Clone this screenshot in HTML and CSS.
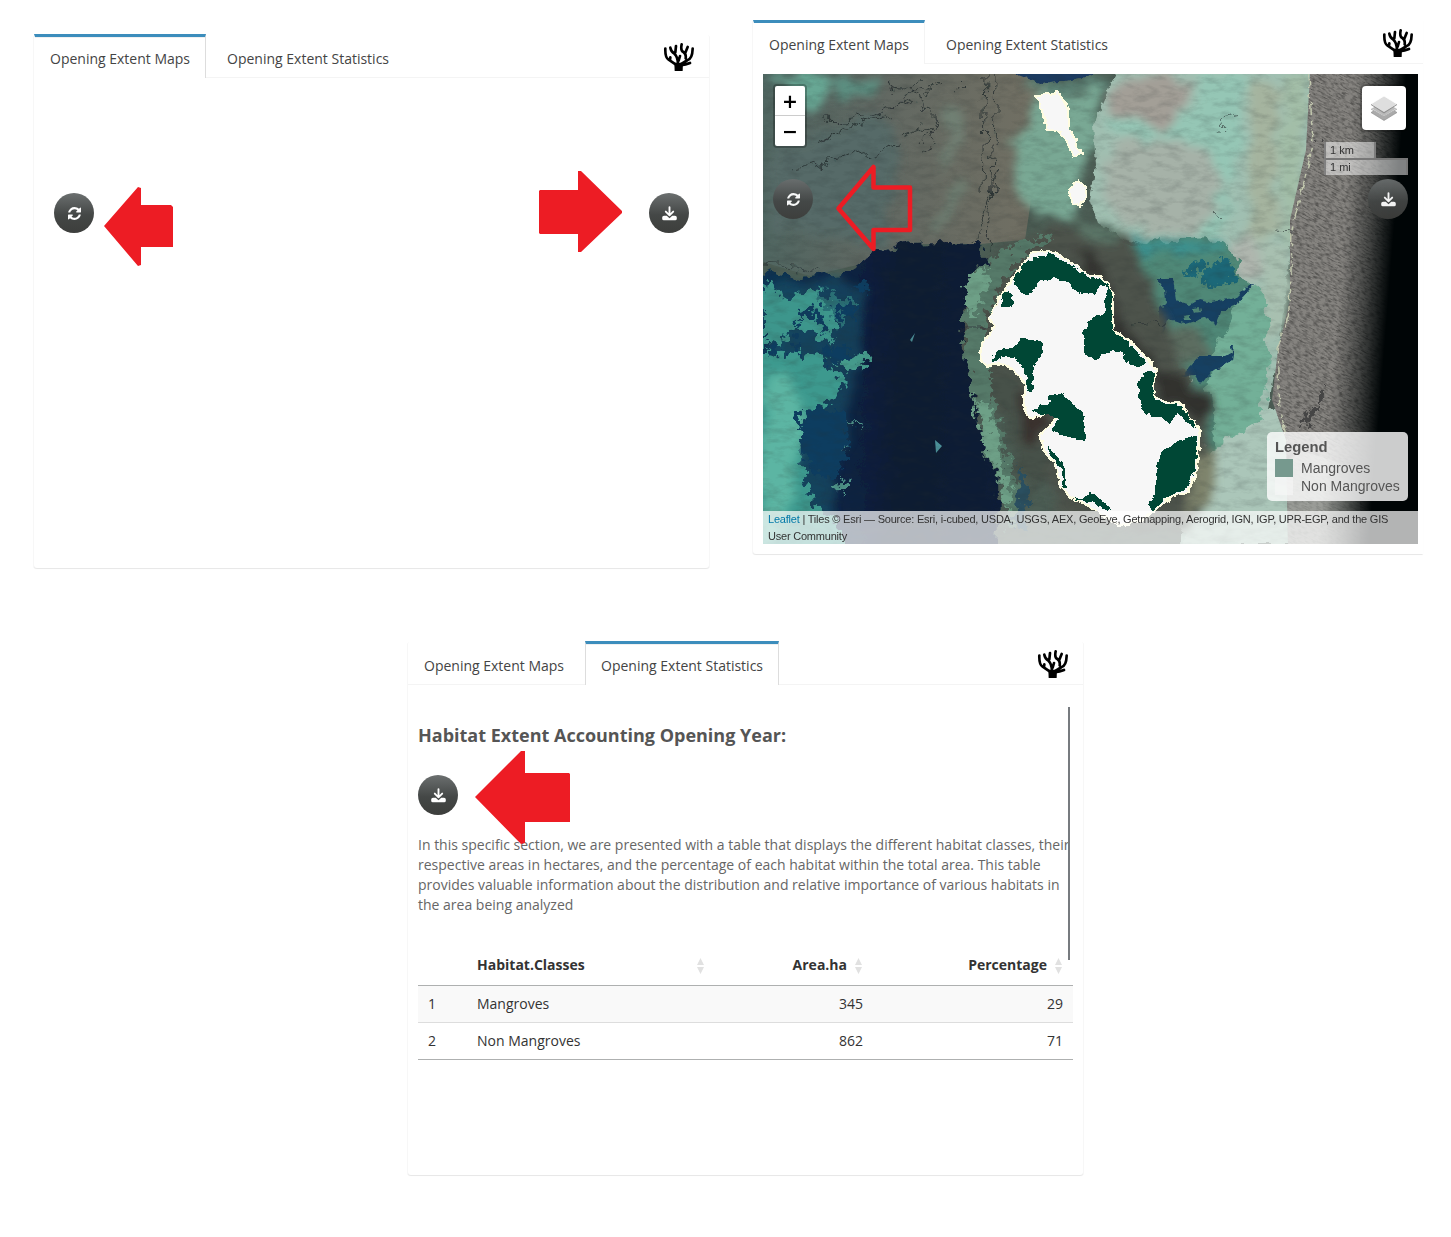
FILE: index.html
```html
<!DOCTYPE html>
<html lang="en">
<head>
<meta charset="utf-8">
<title>Opening Extent</title>
<link rel="stylesheet" href="styles.css">
</head>
<body>
<svg class="defs" width="0" height="0" aria-hidden="true">
  <symbol id="coral" viewBox="0 0 93 90">
    <g fill="none" stroke="#000" stroke-width="8" stroke-linecap="round" stroke-linejoin="round">
      <path d="M7 20Q6 48 17 53L42 70M22 46L21 54M22 17Q24 29 34 35Q44 43 45 66M39 12L37 31M56 7Q52 26 61 30Q70 35 68 49M74 15L67 32M89 20Q88 50 74 54L48 70M51 42L47 56M81 63Q70 68 50 70"/>
    </g>
    <path d="M34 62h26l-1 25H35z"/>
  </symbol>
  <symbol id="refresh" viewBox="0 128 1536 1536"><path fill="#fff" d="M1511 1056q0 5-1 7-64 268-268 434.500t-478 166.500q-146 0-282.500-55t-243.500-157l-129 129q-19 19-45 19t-45-19-19-45v-448q0-26 19-45t45-19h448q26 0 45 19t19 45-19 45l-137 137q71 66 161 102t187 36q134 0 250-65t186-179q11-17 53-117 8-23 30-23h192q13 0 22.500 9.500t9.500 22.500zm25-800v448q0 26-19 45t-45 19h-448q-26 0-45-19t-19-45 19-45l138-138q-148-137-349-137-134 0-250 65t-186 179q-11 17-53 117-8 23-30 23h-199q-13 0-22.500-9.500t-9.500-22.500v-7q65-268 270-434.500t480-166.500q146 0 284 55.500t245 156.500l130-129q19-19 45-19t45 19 19 45z"/></symbol>
  <symbol id="download" viewBox="0 0 15 15"><path d="M7.500 1.200V9M3.800 5.600L7.500 9.300L11.200 5.600" fill="none" stroke="#fff" stroke-width="1.900" stroke-linecap="round" stroke-linejoin="round"/><path fill="#fff" d="M2 9.800H4.800L7.500 12.300L10.200 9.800H13Q14.800 9.800 14.800 11.400V12.800Q14.800 14.300 13.200 14.300H1.800Q.2 14.300 .2 12.800V11.400Q.2 9.800 2 9.800z"/></symbol>
  <symbol id="sort" viewBox="0 0 7 16"><path fill="#e1e1e1" d="M3.500 0L7 7H0zM0 9h7L3.500 16z"/></symbol>
</svg>

<main class="page">
  <div class="row">
    <section class="card">
      <header class="tabs">
        <span class="tab tab-active">Opening Extent Maps</span>
        <span class="tab">Opening Extent Statistics</span>
        <svg class="coral"><use href="#coral"/></svg>
      </header>
      <div class="tools">
        <button class="round"><svg class="ico"><use href="#refresh"/></svg></button>
        <button class="round"><svg class="ico ico-dl"><use href="#download"/></svg></button>
      </div>
      <svg class="marks" viewBox="34 34 675 534"><path d="M104 226L138 187L141 188V205H171L173 207V247H141V265L138 266zM539 191L540 190H578V171H581L622 211V213L581 252H578V234H540L539 233z"/></svg>
    </section>

    <section class="card card-map">
      <header class="tabs tabs-soft">
        <span class="tab tab-active">Opening Extent Maps</span>
        <span class="tab">Opening Extent Statistics</span>
        <svg class="coral"><use href="#coral"/></svg>
      </header>
      <div class="map">
        <svg class="terrain" viewBox="763 74 655 470" preserveAspectRatio="none">
          <defs>
            <linearGradient id="shore" x1="0" x2="1"><stop offset="0" stop-color="#506661"/><stop offset=".4" stop-color="#616862"/><stop offset="1" stop-color="#737063"/></linearGradient>
            <linearGradient id="deep" x1="0" x2="1"><stop offset="0" stop-color="#0d3655"/><stop offset=".4" stop-color="#0a2141"/><stop offset=".6" stop-color="#0a1a31"/><stop offset="1" stop-color="#0a1d37"/></linearGradient>
            <linearGradient id="ocean" gradientUnits="userSpaceOnUse" x1="1338" y1="300" x2="1388" y2="304"><stop offset="0" stop-color="#000506" stop-opacity="0"/><stop offset=".45" stop-color="#000506" stop-opacity=".4"/><stop offset="1" stop-color="#000506"/></linearGradient>
            <filter id="ragged" x="-5%" y="-5%" width="110%" height="110%"><feTurbulence type="fractalNoise" baseFrequency=".06" numOctaves="4" seed="4"/><feDisplacementMap in="SourceGraphic" scale="22" xChannelSelector="R" yChannelSelector="G"/><feGaussianBlur stdDeviation=".7"/></filter>
            <filter id="cloudy" x="-10%" y="-10%" width="120%" height="120%"><feTurbulence type="fractalNoise" baseFrequency=".04" numOctaves="4" seed="9"/><feDisplacementMap in="SourceGraphic" scale="28" xChannelSelector="R" yChannelSelector="G"/><feGaussianBlur stdDeviation="4"/></filter>
            <filter id="steps" x="-5%" y="-5%" width="110%" height="110%"><feTurbulence type="fractalNoise" baseFrequency=".16" numOctaves="2" seed="2"/><feDisplacementMap in="SourceGraphic" scale="6" xChannelSelector="R" yChannelSelector="G"/></filter>
            <filter id="broken" x="-5%" y="-5%" width="110%" height="110%"><feTurbulence type="fractalNoise" baseFrequency=".13" numOctaves="3" seed="12"/><feDisplacementMap in="SourceGraphic" scale="24" xChannelSelector="R" yChannelSelector="G"/><feGaussianBlur stdDeviation=".6"/></filter>
            <filter id="grain" x="0" y="0" width="100%" height="100%" color-interpolation-filters="sRGB"><feTurbulence type="fractalNoise" baseFrequency=".06 .14" numOctaves="5" seed="7"/><feColorMatrix values="0 0 0 0 .15  0 0 0 0 .18  0 0 0 0 .18  2 0 0 0 -.85"/></filter>
            <filter id="waves" x="0" y="0" width="100%" height="100%" color-interpolation-filters="sRGB"><feTurbulence type="fractalNoise" baseFrequency=".18 .7" numOctaves="3" seed="5"/><feColorMatrix values="0 0 0 0 .1  0 0 0 0 .1  0 0 0 0 .1  3 0 0 0 -1.250"/></filter>
            <clipPath id="reefclip"><path d="M1310 74H1418V544H1288L1286 440L1272 400L1278 350L1290 300V220L1306 150z"/></clipPath>
          </defs>
          <rect x="763" y="74" width="655" height="470" fill="#4c5d54"/>
          <path d="M763 74H1050L1025 240L980 244H905L870 262L810 276L763 262z" fill="url(#shore)"/>
          <g filter="url(#cloudy)">
            <path d="M765 74H830L828 95L808 110L780 78z" fill="#67a794"/>
            <path d="M830 80H885L870 95L835 98z" fill="#5c8f81"/>
            <path d="M770 150L870 115L900 130L890 250L770 230z" fill="#566b68"/>
            <path d="M945 110L965 112L955 165L940 170z" fill="#74877b" opacity=".7"/>
            <path d="M930 225L960 180L965 190L935 235z" fill="#6e8578" opacity=".7"/>
            <path d="M1030 85L1080 100L1105 74L1092 170L1070 225L1020 200L1013 150L1035 125z" fill="#79a894"/>
            <path d="M1020 80H1110V90L1060 92z" fill="#5b8276"/>
          </g>
          <path d="M1005 70H1104L1085 77L1065 81L1042 84z" fill="#1b3a60" filter="url(#steps)"/>

          <path d="M1117 70H1325L1300 180L1290 250L1280 340L1262 445L1240 544H1180L1200 430L1170 250L1125 240L1098 223L1090 200L1096 165L1093 125z" fill="#a0bfb1" filter="url(#steps)"/>
          <g filter="url(#cloudy)">
            <path d="M1120 76H1195L1180 110L1170 128L1145 125L1108 110z" fill="#a39f97"/>
            <path d="M1200 74H1250L1240 150L1220 235L1205 240L1190 160L1140 145L1104 125L1109 112L1160 130L1195 110z" fill="#95c6b5"/>
            <path d="M1110 140L1210 145L1225 190L1200 235L1130 230L1098 195z" fill="#a6b2a8"/>
            <path d="M1250 80L1280 90L1275 260L1250 240z" fill="#a5b49f"/>
            <path d="M1282 74H1308L1300 220L1282 250z" fill="#a3bea7"/>
            <path d="M1225 240L1255 235L1260 270L1245 285z" fill="#afb6ae"/>
            <path d="M1255 240L1290 250L1285 330L1265 340z" fill="#a8c0b0"/>
          </g>
          <g filter="url(#ragged)">
            <path d="M1125 242L1222 240L1250 285L1262 350L1262 445L1200 450L1190 380L1140 320z" fill="#508877"/>
            <path d="M1245 290L1262 285L1270 345L1265 410L1250 440L1215 450L1210 390L1215 345z" fill="#73b098"/>
            <path d="M1215 450L1262 415L1285 400L1310 450V544H1180L1205 470z" fill="#abc6b9"/>
          </g>
          <g filter="url(#cloudy)">
            <path d="M1132 240L1222 241L1225 252L1140 256z" fill="#3b9190"/>
            <path d="M1135 330L1200 330L1215 350L1180 365L1200 400L1160 360z" fill="#5b6d61"/>
          </g>
          <g fill="#173f62" filter="url(#steps)">
            <path fill-rule="evenodd" d="M1157 278L1173 278L1176 300L1190 305L1200 299L1212 302L1235 298L1249 284L1254 284L1236 305L1220 312L1215 326L1208 317L1185 324L1168 320L1163 333L1160 325L1160 308L1166 302L1165 290zM1192 308L1200 307L1201 312L1194 313zM1183 316L1190 315V320H1184z"/>
            <path d="M1180 378L1200 356L1225 356L1232 352L1231 347H1234L1232 360L1215 371L1206 377L1200 384L1194 375z"/>
          </g>
          <path d="M1180 276L1196 260L1203 264L1201 272L1193 278zM1204 285L1206 267L1227 258L1238 275L1230 284L1216 287z" fill="#1a6778" filter="url(#broken)"/>
          <g filter="url(#cloudy)">
            <path d="M1050 225L1130 240L1165 320L1180 365L1215 410L1212 435L1204 510L1175 530L1060 520L1020 430L960 390L955 300L1000 250z" fill="#4d534c"/>
            <path d="M1068 245L1100 260L1130 335L1165 365L1210 405L1205 430L1188 410L1160 400L1150 365L1112 340L1110 295z" fill="#30312f"/>
            <path d="M1055 455L1035 430L1010 375L985 370L975 345L985 300L1020 255L1000 250L975 290L965 350L1000 410L1025 500z" fill="#475148"/>
            <path d="M1010 385L1030 400L1040 420L1055 420L1035 450L1020 420z" fill="#3b322e"/>
            <path d="M1065 217L1100 225L1125 237L1090 240z" fill="#5c7668"/>
            <path d="M1200 450L1215 455L1205 500L1180 520z" fill="#7e836c"/>
          </g>

          <path filter="url(#ragged)" d="M755 267L800 278L850 272L880 252L910 244L977 242L990 262L968 290L962 340L975 385L982 430L1000 460L997 555H755z" fill="url(#deep)"/>
          <path filter="url(#cloudy)" d="M765 285L840 280L870 290L862 340L850 410L835 500L825 540H765z" fill="#1d5c71" opacity=".5"/>
          <g filter="url(#broken)">
            <path d="M763 280L790 300L805 288L820 290L838 330L830 345L815 335L795 325L780 345L770 340L763 355z" fill="#3d968c"/>
            <path d="M766 355L800 352L820 356L830 370L848 382L835 395L820 410L812 420L802 430L800 455L806 480L812 500L822 515L838 518L840 550H755V355z" fill="#3c998e"/>
            <path d="M835 360L866 354L868 362L850 373z" fill="#449a8b"/>
            <path d="M815 290L853 300L842 325L830 315z" fill="#2c7177"/>
            <path d="M828 445l8-5 3 6-5 6zM815 460l7 3-2 6-6-2zM838 480l6-2 2 10-7 6zM845 415l20 12-8-1zM843 440l6 12-4-2z" fill="#50958a"/>
          </g>
          <path filter="url(#cloudy)" d="M766 372L790 380L808 415L795 460L795 510L775 545H755z" fill="#5cb5a3"/>
          <g filter="url(#broken)">
            <path d="M975 270L1000 252L1025 240L1055 236L1020 260L1000 290L985 320L990 380L1000 430L1012 470L1025 510L1010 530L997 470L979 452L990 440L980 420L970 385L965 350L962 315L970 300z" fill="#567a69"/>
            <path d="M968 276L990 266L984 290L972 320L964 302zM975 400L990 405L1000 450L1012 490L1006 512L998 470L985 450z" fill="#6ea087"/>
            <path d="M1020 465L1030 490L1025 530L1015 525z" fill="#294f61"/>
          </g>
          <path d="M935 440L942 446L936 453zM910 340L915 333L912 342z" fill="#4b8f98"/>
          <g fill="#0f3c60" filter="url(#broken)"><circle cx="797" cy="346" r="6"/><circle cx="775" cy="349" r="5"/><circle cx="840" cy="309" r="8"/><circle cx="852" cy="310" r="6"/><circle cx="862" cy="287" r="7"/><path d="M792 330L800 310L820 308L828 335L820 328L814 316L803 316zM798 415L815 410L845 410L850 420L842 470L830 478L815 475L803 450zM820 350L850 345L842 362L825 360z"/></g>

          <rect x="763" y="74" width="655" height="470" filter="url(#grain)" opacity=".2"/>

          <g clip-path="url(#reefclip)">
            <rect x="1265" y="74" width="153" height="470" fill="#85837f"/>
            <g transform="rotate(28 1340 300)"><rect x="1060" y="0" width="520" height="620" filter="url(#waves)" opacity=".42"/></g>
            <path d="M1300 420L1320 402L1320 388L1325 394L1315 415L1300 428zM1319 140l6-3 1 7z" fill="#444" filter="url(#broken)"/>
            <path d="M1275 480L1300 450L1360 470V544H1260z" fill="#b0b5af" opacity=".5"/>
          </g>
          <path d="M1309 74L1313 145L1302 190L1292 230L1290 310L1277 350L1280 410L1287 440" fill="none" stroke="#c2c8ae" stroke-width="1.500" stroke-dasharray="14 6 4 3" filter="url(#steps)"/>
          <rect x="1300" y="74" width="118" height="470" fill="url(#ocean)"/>

          <g fill="none" stroke="#272f30" stroke-width="1" filter="url(#ragged)">
            <path d="M818 120Q860 125 905 102T930 85M820 142Q850 125 890 115M795 170Q850 160 900 145M915 85L925 108L938 120L925 140M905 135L930 125L937 145L920 152M985 75L982 190M995 78L990 250M1000 170L980 225L972 240M890 75Q880 90 905 90L925 80M960 80L970 90L955 98" opacity=".85"/>
            <path d="M763 265L795 267L820 272" opacity=".6"/>
            <path d="M1235 112L1225 125L1217 134M1214 211L1222 220M1275 230L1292 231" opacity=".6"/>
            <path d="M958 328H996M1132 329L1150 325L1162 326" opacity=".7"/>
          </g>

          <g fill="#f7f7f7" stroke="#fffde0" stroke-width="2" filter="url(#steps)" shape-rendering="crispEdges">
            <path d="M1036 95L1048 94L1058 92L1068 107L1069 127L1079 148L1081 153L1074 157L1061 132L1047 130L1041 107z"/>
            <path d="M1078 180L1086 187V198L1080 206L1073 203L1069 192L1073 184z"/>
            <path d="M1030 254L1044 251L1058 254L1070 262L1090 275L1101 277L1113 292V330L1130 342L1142 353L1157 370L1152 383L1155 397L1167 403L1180 402L1190 417L1200 430L1197 470L1188 492L1170 498L1155 510L1143 520L1120 526L1107 518L1087 505L1070 497L1060 487L1055 463L1045 453L1040 435L1057 418L1047 413L1032 419L1024 410L1025 383L1010 367L1000 363L987 367L980 360L982 343L995 327L989 317L1002 293L1012 280z"/>
          </g>
          <g fill="#064635" filter="url(#steps)" shape-rendering="crispEdges">
            <path d="M1012 284L1022 265L1033 258L1050 254L1067 263L1090 278L1100 279L1112 290L1112 330L1130 344L1147 363L1140 368L1125 362L1123 353L1112 350L1093 360L1083 352V333L1092 318L1105 313V297L1108 287L1100 285L1095 294L1080 293L1067 283L1055 278L1038 282L1033 293L1022 294z"/>
            <path d="M1002 293L1008 289L1012 296V308H1001z"/>
            <path d="M991 360L998 350L1012 347L1023 339L1043 342L1042 353L1033 367L1034 380L1032 391H1028L1027 378L1023 370L1015 358L1002 357L992 362z"/>
            <path d="M1032 413L1042 405L1048 405L1050 395L1062 393L1070 402L1083 412L1086 440L1067 437L1052 430L1058 419L1043 413z"/>
            <path d="M1046 444L1052 452L1063 463L1067 488H1063L1062 468L1050 455z"/>
            <path d="M1138 382L1145 372L1156 372L1151 385L1155 400L1167 405L1177 403L1186 411L1197 428L1183 420L1176 413L1170 423L1162 417L1152 417L1140 408z"/>
            <path d="M1197 435V455L1195 470L1187 487L1163 500L1153 510L1148 505L1155 493L1157 467L1163 450L1180 440z"/>
            <path d="M1073 498L1082 499L1090 493L1102 500L1112 511L1103 508L1092 502L1080 501z"/>
          </g>
        </svg>
        <div class="zoom"><span>+</span><span>−</span></div>
        <div class="layers">
          <svg viewBox="0 0 26 26"><path fill="#aaa" stroke="#888" stroke-width=".6" d="M0 17.500L13 10L26 17.500L13 25.500z"/><path fill="#bbb" stroke="#fff" stroke-width=".8" d="M0 13.500L13 6L26 13.500L13 21.500z"/><path fill="#aaa" d="M0 13.500L13 21L26 13.500V14.500L13 22.500L0 14.500z"/><path fill="#dedede" stroke="#fff" stroke-width=".8" d="M0 9L13 1L26 9L13 17.500z"/><path fill="#8f8f8f" d="M0 9L13 17L26 9V10L13 18.500L0 10z"/></svg>
        </div>
        <div class="scale"><div class="km">1 km</div><div class="mi">1 mi</div></div>
        <div class="legend">
          <strong>Legend</strong>
          <div class="entry"><i class="sw sw-m"></i>Mangroves</div>
          <div class="entry"><i class="sw sw-n"></i>Non Mangroves</div>
        </div>
        <div class="credit"><a>Leaflet</a> | Tiles © Esri — Source: Esri, i-cubed, USDA, USGS, AEX, GeoEye, Getmapping, Aerogrid, IGN, IGP, UPR-EGP, and the GIS<br>User Community</div>
      </div>
      <div class="tools tools-over">
        <button class="round"><svg class="ico"><use href="#refresh"/></svg></button>
        <button class="round"><svg class="ico ico-dl"><use href="#download"/></svg></button>
      </div>
      <svg class="marks marks-line" viewBox="753 20 670 534"><path d="M838.500 208.500L873.500 167V187.500H910V230H873.500V249z"/></svg>
    </section>
  </div>

  <section class="card card-stats">
    <header class="tabs">
      <span class="tab">Opening Extent Maps</span>
      <span class="tab tab-active tab-mid">Opening Extent Statistics</span>
      <svg class="coral"><use href="#coral"/></svg>
    </header>
    <div class="stats">
      <h2>Habitat Extent Accounting Opening Year:</h2>
      <button class="round"><svg class="ico ico-dl"><use href="#download"/></svg></button>
      <p>In this specific section, we are presented with a table that displays the different habitat classes, their<br>respective areas in hectares, and the percentage of each habitat within the total area. This table<br>provides valuable information about the distribution and relative importance of various habitats in<br>the area being analyzed</p>
      <table>
        <colgroup><col class="c1"><col class="c2"><col class="c3"><col class="c4"></colgroup>
        <thead><tr><th></th><th><div class="head"><span>Habitat.Classes</span><svg class="sort"><use href="#sort"/></svg></div></th><th><div class="head head-num"><span>Area.ha</span><svg class="sort"><use href="#sort"/></svg></div></th><th><div class="head head-num"><span>Percentage</span><svg class="sort"><use href="#sort"/></svg></div></th></tr></thead>
        <tbody>
          <tr><td>1</td><td>Mangroves</td><td class="num">345</td><td class="num">29</td></tr>
          <tr><td>2</td><td>Non Mangroves</td><td class="num">862</td><td class="num">71</td></tr>
        </tbody>
      </table>
    </div>
    <div class="scrollbar"></div>
    <svg class="marks" viewBox="408 641 675 534"><path d="M475 797L521 751H525V773H569L570 774V822H525V843L521 844z"/></svg>
  </section>
</main>
</body>
</html>
```
FILE: styles.css
```css
* { box-sizing: border-box; }
body { margin: 0; background: #fff; font: 14px/20px "Open Sans", "Noto Sans", sans-serif; color: #333; }
.defs { position: absolute; }
.page { width: 1451px; height: 1237px; padding: 20px 0 0 34px; overflow: hidden; }
.row { display: flex; align-items: flex-start; gap: 44px; }
.card { position: relative; width: 675px; height: 534px; flex: none; margin-top: 14px; border-radius: 3px; background: #fff; box-shadow: 0 1px 1px rgba(0,0,0,.07), -1px 1px 0 #f8f8f8, 1px 1px 0 #f8f8f8; }
.card-map { width: 670px; margin-top: 0; border-radius: 0 0 0 3px; box-shadow: 0 1px 1px rgba(0,0,0,.07), -1px 1px 0 #f8f8f8; }
.card-stats { margin: 73px 0 0 374px; }

.tabs { display: flex; height: 44px; border-bottom: 1px solid #f4f4f4; }
.tab { height: 44px; margin-right: 5px; padding: 12px 15px 0; border: solid transparent; border-width: 3px 1px 0; color: #444; white-space: nowrap; }
.tab-active { background: #fff; border-top-color: #3c8dbc; border-right-color: #ddd; box-shadow: inset 0 1px 0 #f0f0f0; }
.tab-mid { border-left-color: #ddd; }
.tabs-soft .tab-active { border-right-color: #f4f4f4; box-shadow: none; }
.coral { width: 31px; height: 30px; margin: 8px 15px 0 auto; }
.card-map .coral { margin-right: 10px; }

.round { display: flex; width: 40px; height: 40px; align-items: center; justify-content: center; padding: 0; border: 0; border-radius: 50%; background: linear-gradient(#6b6f6f, #444746 55%, #3d3e3c); }
.ico { width: 13px; height: 13px; }
.ico-dl { width: 15px; height: 15px; }
.tools { display: flex; justify-content: space-between; margin: 115px 20px 0; }
.tools-over { position: absolute; top: 159px; left: 20px; width: 635px; margin: 0; }
.tools-over .round { opacity: .95; }
.marks { position: absolute; inset: 0; width: 100%; height: 100%; pointer-events: none; fill: #ed1c24; }
.marks-line { fill: none; stroke: #ed1c24; stroke-width: 4.500; stroke-linejoin: round; }

.map { position: relative; width: 655px; height: 470px; margin: 10px 0 0 10px; overflow: hidden; font-family: "Liberation Sans", Arial, sans-serif; }
.terrain { display: block; width: 655px; height: 470px; }
.zoom { position: absolute; left: 12px; top: 12px; width: 30px; height: 60px; border-radius: 2px; background: #fff; box-shadow: 0 0 0 2px rgba(0,0,0,.25); font: bold 19px/30px "DejaVu Sans", sans-serif; color: #000; text-align: center; }
.zoom span { display: block; height: 30px; }
.zoom span:first-child { border-bottom: 1px solid #ccc; }
.layers { position: absolute; left: 599px; top: 12px; display: flex; width: 44px; height: 44px; align-items: center; justify-content: center; border-radius: 4px; background: #fff; box-shadow: 0 0 0 2px rgba(0,0,0,.2); }
.layers svg { width: 26px; height: 26px; }
.scale { position: absolute; left: 561px; top: 68px; font-size: 11px; line-height: 16px; color: #333; }
.scale div { height: 16px; padding-left: 4px; background: rgba(255,255,255,.5); border: 2px solid rgba(119,119,119,.85); border-top: 0; }
.scale .km { width: 52px; border-bottom: 0; }
.scale .mi { width: 84px; border-top: 2px solid #777; border-bottom: 0; height: 17px; line-height: 15px; }
.legend { position: absolute; left: 504px; top: 358px; width: 141px; height: 69px; padding: 6px 8px; border-radius: 5px; background: rgba(255,255,255,.8); color: #555; line-height: 18px; white-space: nowrap; }
.legend strong { display: block; margin-bottom: 3px; font-size: 14.800px; }
.entry { display: flex; gap: 8px; }
.sw { width: 18px; height: 18px; }
.sw-m { background: #76998e; }
.sw-n { background: rgba(247,247,247,.6); }
.credit { position: absolute; left: 0; bottom: 0; width: 655px; height: 33px; padding: 0 5px; background: rgba(255,255,255,.7); color: #333; font-size: 11px; line-height: 17px; letter-spacing: -.21px; white-space: nowrap; }
.credit a { color: #0078a8; }

.stats { padding: 40px 10px 0; }
.stats h2 { margin: 0 0 30px; font-size: 18px; line-height: 20px; font-weight: 700; color: #555; }
.stats p { margin: 20px 0 30px; color: #666; white-space: nowrap; }
table { width: 655px; table-layout: fixed; border-collapse: separate; border-spacing: 0; border-bottom: 1px solid #aeb0b0; }
.c1 { width: 49px; }
.c2 { width: 248px; }
.c3 { width: 158px; }
.c4 { width: 200px; }
th { height: 41px; padding: 0 11px 0 10px; border-bottom: 1px solid #aeb0b0; text-align: left; }
td { height: 36px; padding: 0 10px; }
tbody tr:first-child td { height: 37px; background: #f9f9f9; border-bottom: 1px solid #ddd; }
.head { display: flex; align-items: center; justify-content: space-between; }
.head-num { justify-content: flex-end; gap: 8px; }
.sort { width: 7px; height: 16px; margin-top: 2px; }
.num { text-align: right; }
.scrollbar { position: absolute; left: 660px; top: 66px; width: 2px; height: 253px; background: #777b7f; }
```
